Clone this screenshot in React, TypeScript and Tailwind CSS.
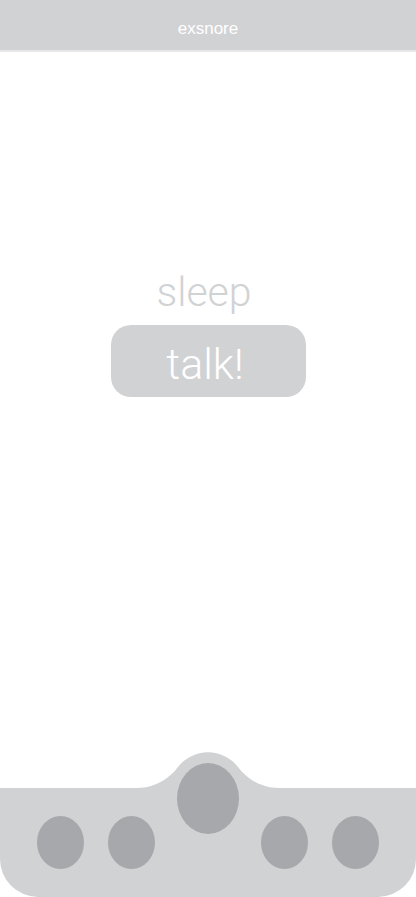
import React from "react";

export default function App() {
  const small = "w-[47px] h-[53px] rounded-[50%] bg-[#a7a8ab]";
  return (
    <div className="h-[897px] w-full flex flex-col bg-white overflow-hidden" style={{ fontFamily: "Roboto, 'Liberation Sans', sans-serif" }}>
      <header className="h-[52px] shrink-0 bg-[#d1d2d4] border-b-2 border-[#e7e7e8] flex justify-center pt-[20px]">
        <span className="text-[17px] leading-[18px] text-white" style={{ fontFamily: "'Liberation Sans', Arial, sans-serif" }}>exsnore</span>
      </header>
      <main className="flex-1 flex flex-col items-center pt-[219px]">
        <div className="text-[41px] leading-[42px] font-light text-[#d1d2d4] mr-[8px]">sleep</div>
        <button className="mt-[12px] w-[195px] h-[72px] rounded-[20px] bg-[#d1d2d4] flex items-center justify-center pt-[7px] pr-[6px]">
          <span className="text-[43px] leading-[43px] font-light text-white">talk!</span>
        </button>
      </main>
      <nav className="relative shrink-0 h-[109px] bg-[#d1d2d4] rounded-b-[38px]">
        <svg className="absolute left-[130px] top-[-36px]" width="156" height="38" viewBox="0 0 156 38">
          <path d="M0,38 L0,36 L7,36 C27,36 41,24.5 48,15 A38,38 0 0 1 108,15 C115,24.5 129,36 149,36 L156,36 L156,38 Z" fill="#d1d2d4" />
        </svg>
        <div className="absolute left-[177px] top-[-25px] w-[62px] h-[71px] rounded-[50%] bg-[#a7a8ab]" />
        <div className="h-full flex items-start pt-[28px] pl-[37px]">
          <div className={small} />
          <div className={`${small} ml-[24px]`} />
          <div className={`${small} ml-[106px]`} />
          <div className={`${small} ml-[24px]`} />
        </div>
      </nav>
    </div>
  );
}
